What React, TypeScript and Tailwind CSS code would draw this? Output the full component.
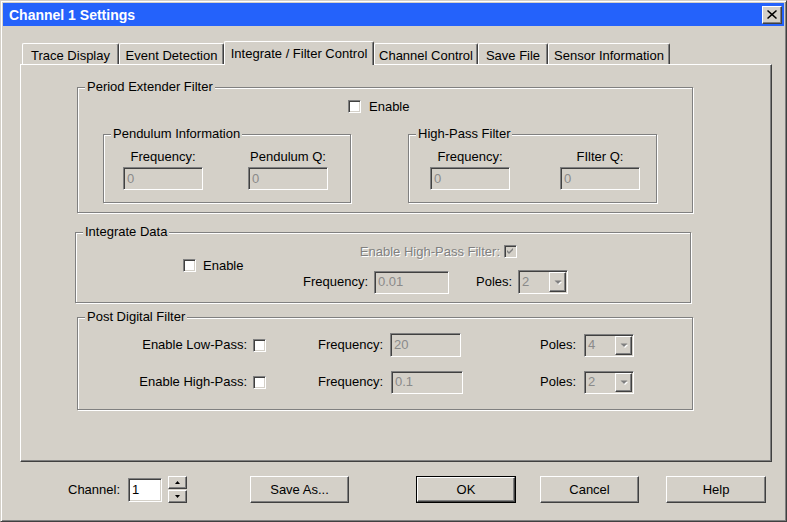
import React from "react";

const sunken =
  "border border-t-[#808080] border-l-[#808080] border-b-white border-r-white shadow-[inset_1px_1px_0_#404040,inset_-1px_-1px_0_#d4d0c8]";
const raised =
  "border border-t-white border-l-white border-b-[#404040] border-r-[#404040] shadow-[inset_-1px_-1px_0_#808080]";
const etched =
  "border border-[#808080] shadow-[1px_1px_0_#fff,inset_1px_1px_0_#fff]";

function Group({
  label,
  className,
  children,
}: {
  label: string;
  className: string;
  children?: React.ReactNode;
}) {
  return (
    <div className={`relative shrink-0 ${etched} ${className}`}>
      <div className="absolute -top-[9px] left-[7px] px-[2px] bg-[#d4d0c8] leading-[16px] whitespace-nowrap">
        {label}
      </div>
      {children}
    </div>
  );
}

function CheckBox({ disabled, checked }: { disabled?: boolean; checked?: boolean }) {
  return (
    <div
      className={`w-[13px] h-[13px] shrink-0 flex items-center justify-center ${sunken} ${
        disabled ? "bg-[#d4d0c8]" : "bg-white"
      }`}
    >
      {checked && (
        <svg width="7" height="7" viewBox="0 0 7 7">
          <path
            d="M0 2 L2 4 L6 0 L6 2 L2 6 L0 4 Z"
            fill={disabled ? "#808080" : "#000"}
          />
        </svg>
      )}
    </div>
  );
}

function TextBox({ value, className }: { value: string; className: string }) {
  return (
    <div
      className={`shrink-0 flex items-center pl-[3px] bg-[#d4d0c8] text-[#8a8a8a] leading-[16px] ${sunken} ${className}`}
    >
      {value}
    </div>
  );
}

function DownArrow({ color }: { color: string }) {
  return (
    <svg width="8" height="5" viewBox="0 0 8 5">
      <path d="M1 1 L7 1 L4 4 Z" fill="#fff" transform="translate(1 1)" />
      <path d="M0 0 L7 0 L3.5 3.5 Z" fill={color} transform="translate(0.5 0.5)" />
    </svg>
  );
}

function Combo({ value, className }: { value: string; className: string }) {
  return (
    <div
      className={`shrink-0 flex items-stretch bg-[#d4d0c8] text-[#8a8a8a] leading-[16px] p-[1px] ${sunken} ${className}`}
    >
      <div className="flex-1 flex items-center pl-[2px]">{value}</div>
      <div className={`w-[17px] flex items-center justify-center bg-[#d4d0c8] ${raised}`}>
        <DownArrow color="#808080" />
      </div>
    </div>
  );
}

function Button({
  children,
  className,
  def,
}: {
  children: React.ReactNode;
  className: string;
  def?: boolean;
}) {
  if (def) {
    return (
      <div className={`shrink-0 border border-black ${className}`}>
        <div className={`w-full h-full flex items-center justify-center ${raised}`}>
          {children}
        </div>
      </div>
    );
  }
  return (
    <div className={`shrink-0 flex items-center justify-center ${raised} ${className}`}>
      {children}
    </div>
  );
}

function Tab({
  label,
  w,
  active,
}: {
  label: string;
  w: string;
  active?: boolean;
}) {
  if (active) {
    return (
      <div
        className={`relative z-10 -mb-[1px] h-[24px] ${w} shrink-0 flex justify-center pt-[4px] leading-[16px] bg-[#d4d0c8] border-t border-l border-t-white border-l-white border-r border-r-[#404040] shadow-[inset_-1px_0_0_#808080] rounded-tl-[2px] rounded-tr-[2px] whitespace-nowrap`}
      >
        {label}
      </div>
    );
  }
  return (
    <div
      className={`h-[21px] ${w} shrink-0 flex justify-center pt-[4px] leading-[16px] border-t border-l border-t-white border-l-white border-r border-r-[#404040] shadow-[inset_-1px_0_0_#808080] rounded-tl-[2px] rounded-tr-[2px] whitespace-nowrap`}
    >
      {label}
    </div>
  );
}

export default function App() {
  return (
    <div className="w-[787px] h-[522px] bg-[#d4d0c8] font-['Liberation_Sans',Arial,sans-serif] text-[13px] text-black border border-t-[#d4d0c8] border-l-[#d4d0c8] border-b-[#404040] border-r-[#404040] shadow-[inset_1px_1px_0_#fff,inset_-1px_-1px_0_#808080] p-[2px] flex flex-col overflow-hidden select-none">
      {/* Title bar */}
      <div className="h-[23px] shrink-0 bg-[#2462fb] flex items-center justify-between pl-[6px] pr-[2px]">
        <div className="text-white font-bold text-[14px] leading-[16px] pt-[1px]">
          Channel 1 Settings
        </div>
        <div
          className={`w-[20px] h-[18px] bg-[#d4d0c8] flex items-center justify-center ${raised}`}
        >
          <svg width="10" height="9" viewBox="0 0 10 9">
            <path
              d="M1 0 L5 3.5 L9 0 L10 1 L6.2 4.5 L10 8 L9 9 L5 5.5 L1 9 L0 8 L3.8 4.5 L0 1 Z"
              fill="#000"
            />
          </svg>
        </div>
      </div>

      {/* Body */}
      <div className="flex-1 flex flex-col pl-[17px]">
        {/* Tabs */}
        <div className="mt-[15px] h-[23px] ml-[2px] flex items-end">
          <Tab label="Trace Display" w="w-[97px]" />
          <Tab label="Event Detection" w="w-[105px]" />
          <Tab label="Integrate / Filter Control" w="w-[150px]" active />
          <Tab label="Channel Control" w="w-[104px]" />
          <Tab label="Save File" w="w-[70px]" />
          <Tab label="Sensor Information" w="w-[122px]" />
        </div>

        {/* Panel */}
        <div
          className={`w-[752px] h-[398px] shrink-0 flex flex-col border border-t-white border-l-white border-b-[#404040] border-r-[#404040] shadow-[inset_-1px_-1px_0_#808080]`}
        >
          {/* Period Extender Filter */}
          <Group
            label="Period Extender Filter"
            className="mt-[22px] ml-[56px] w-[616px] h-[126px] flex flex-col"
          >
            <div className="mt-[12px] h-[13px] pl-[270px] flex items-center gap-[8px]">
              <CheckBox />
              <span className="leading-[16px]">Enable</span>
            </div>
            <div className="mt-[21px] pl-[25px] flex">
              <Group
                label="Pendulum Information"
                className="w-[248px] h-[69px] flex pl-[19px] pt-[14px]"
              >
                <div className="w-[80px] flex flex-col items-center">
                  <div className="leading-[16px] whitespace-nowrap">Frequency:</div>
                  <TextBox value="0" className="mt-[2px] w-[80px] h-[23px]" />
                </div>
                <div className="ml-[45px] w-[80px] flex flex-col items-center">
                  <div className="leading-[16px] whitespace-nowrap">Pendulum Q:</div>
                  <TextBox value="0" className="mt-[2px] w-[80px] h-[23px]" />
                </div>
              </Group>
              <Group
                label="High-Pass Filter"
                className="ml-[57px] w-[249px] h-[69px] flex pl-[21px] pt-[14px]"
              >
                <div className="w-[80px] flex flex-col items-center">
                  <div className="leading-[16px] whitespace-nowrap">Frequency:</div>
                  <TextBox value="0" className="mt-[2px] w-[80px] h-[23px]" />
                </div>
                <div className="ml-[50px] w-[80px] flex flex-col items-center">
                  <div className="leading-[16px] whitespace-nowrap">FIlter Q:</div>
                  <TextBox value="0" className="mt-[2px] w-[80px] h-[23px]" />
                </div>
              </Group>
            </div>
          </Group>

          {/* Integrate Data */}
          <Group
            label="Integrate Data"
            className="mt-[19px] ml-[54px] w-[616px] h-[71px] flex items-start"
          >
            <div className="ml-[107px] mt-[26px] w-[120px] h-[13px] flex items-center gap-[7px]">
              <CheckBox />
              <span className="leading-[16px]">Enable</span>
            </div>
            <div className="pt-[12px] flex flex-col">
              <div className="w-[214px] h-[13px] flex items-center justify-end gap-[4px]">
                <span className="leading-[16px] text-[#808080] [text-shadow:1px_1px_0_#fff] whitespace-nowrap">
                  Enable High-Pass Filter:
                </span>
                <CheckBox disabled checked />
              </div>
              <div className="mt-[12px] flex items-center">
                <span className="w-[71px] leading-[16px] whitespace-nowrap">Frequency:</span>
                <TextBox value="0.01" className="w-[75px] h-[23px]" />
                <span className="ml-[27px] w-[42px] leading-[16px]">Poles:</span>
                <Combo value="2" className="w-[50px] h-[24px]" />
              </div>
            </div>
          </Group>

          {/* Post Digital Filter */}
          <Group
            label="Post Digital Filter"
            className="mt-[14px] ml-[56px] w-[616px] h-[93px] flex flex-col pt-[15px]"
          >
            <div className="h-[24px] flex items-center">
              <div className="w-[188px] flex items-center justify-end gap-[6px]">
                <span className="leading-[16px] whitespace-nowrap">Enable Low-Pass:</span>
                <CheckBox />
              </div>
              <span className="ml-[52px] w-[72px] leading-[16px] whitespace-nowrap">Frequency:</span>
              <TextBox value="20" className="w-[71px] h-[24px]" />
              <span className="ml-[79px] w-[44px] leading-[16px]">Poles:</span>
              <Combo value="4" className="w-[50px] h-[23px]" />
            </div>
            <div className="mt-[13px] h-[24px] flex items-center">
              <div className="w-[188px] flex items-center justify-end gap-[6px]">
                <span className="leading-[16px] whitespace-nowrap">Enable High-Pass:</span>
                <CheckBox />
              </div>
              <span className="ml-[52px] w-[73px] leading-[16px] whitespace-nowrap">Frequency:</span>
              <TextBox value="0.1" className="w-[72px] h-[23px]" />
              <span className="ml-[77px] w-[44px] leading-[16px]">Poles:</span>
              <Combo value="2" className="w-[50px] h-[23px]" />
            </div>
          </Group>
        </div>

        {/* Bottom row */}
        <div className="mt-[14px] ml-[48px] flex items-center h-[27px]">
          <span className="w-[60px] leading-[16px]">Channel:</span>
          <div
            className={`w-[34px] h-[24px] bg-white flex items-center pl-[3px] leading-[16px] ${sunken}`}
          >
            1
          </div>
          <div className="ml-[6px] w-[19px] flex flex-col gap-[1px]">
            <div className={`h-[13px] flex items-center justify-center ${raised}`}>
              <svg width="5" height="3" viewBox="0 0 5 3">
                <path d="M2.5 0 L5 3 L0 3 Z" fill="#000" />
              </svg>
            </div>
            <div className={`h-[13px] flex items-center justify-center ${raised}`}>
              <svg width="5" height="3" viewBox="0 0 5 3">
                <path d="M0 0 L5 0 L2.5 3 Z" fill="#000" />
              </svg>
            </div>
          </div>
          <Button className="ml-[63px] w-[99px] h-[27px]">Save As...</Button>
          <Button className="ml-[67px] w-[100px] h-[27px]" def>
            OK
          </Button>
          <Button className="ml-[24px] w-[99px] h-[27px]">Cancel</Button>
          <Button className="ml-[27px] w-[100px] h-[27px]">Help</Button>
        </div>
      </div>
    </div>
  );
}
